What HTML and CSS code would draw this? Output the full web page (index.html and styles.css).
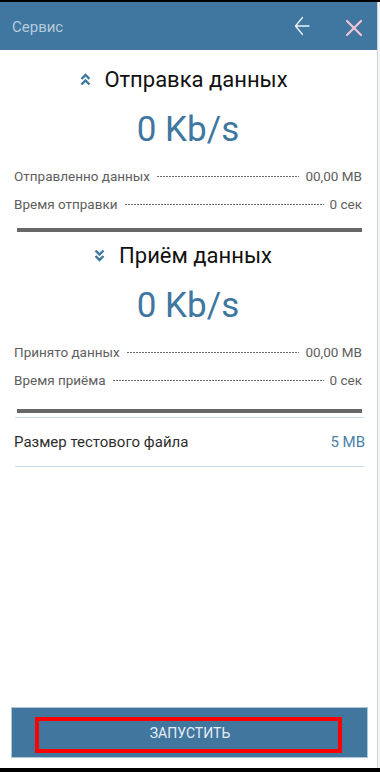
FILE: index.html
```html
<!DOCTYPE html>
<html lang="ru">
<head>
<meta charset="utf-8">
<title>Сервис</title>
<link rel="stylesheet" href="styles.css">
</head>
<body>
<div class="app">
  <div class="screen">
    <header class="header">
      <span class="header-title">Сервис</span>
      <div class="header-actions">
        <svg class="icon-back" width="16" height="20" viewBox="0 0 16 20">
          <path d="M8.5 1.5 L1.5 10 L8.5 18.5 M1.5 10 H15" fill="none" stroke="#eef3f7" stroke-width="1.3" stroke-linecap="round" stroke-linejoin="round"/>
        </svg>
        <svg class="icon-close" width="18" height="18" viewBox="0 0 18 18">
          <path d="M2 2 L16 16 M16 2 L2 16" fill="none" stroke="#f3c3d5" stroke-width="2.2" stroke-linecap="round"/>
        </svg>
      </div>
    </header>

    <main class="content">
      <div class="section-title title-up">
        <svg class="chev" width="11" height="13" viewBox="0 0 11 13">
          <path d="M1.5 6 L5.5 2 L9.5 6 M1.5 11.5 L5.5 7.5 L9.5 11.5" fill="none" stroke="#3f77a1" stroke-width="2.4"/>
        </svg>
        <span>Отправка данных</span>
      </div>
      <div class="speed speed-up">0 Kb/s</div>
      <div class="stat stat-first">
        <span class="stat-label">Отправленно данных</span>
        <span class="dots"></span>
        <span class="stat-value">00,00 MB</span>
      </div>
      <div class="stat">
        <span class="stat-label">Время отправки</span>
        <span class="dots"></span>
        <span class="stat-value">0 сек</span>
      </div>
      <div class="bar bar-first"></div>

      <div class="section-title title-down">
        <svg class="chev" width="11" height="13" viewBox="0 0 11 13">
          <path d="M1.5 1.5 L5.5 5.5 L9.5 1.5 M1.5 7 L5.5 11 L9.5 7" fill="none" stroke="#3f77a1" stroke-width="2.4"/>
        </svg>
        <span>Приём данных</span>
      </div>
      <div class="speed">0 Kb/s</div>
      <div class="stat stat-first">
        <span class="stat-label">Принято данных</span>
        <span class="dots"></span>
        <span class="stat-value">00,00 MB</span>
      </div>
      <div class="stat">
        <span class="stat-label">Время приёма</span>
        <span class="dots"></span>
        <span class="stat-value">0 сек</span>
      </div>
      <div class="bar bar-second"></div>
      <div class="rule rule-top"></div>
      <div class="setting">
        <span class="setting-label">Размер тестового файла</span>
        <span class="setting-value">5 MB</span>
      </div>
      <div class="rule"></div>
    </main>

    <footer class="footer">
      <button class="start-btn" type="button">
        <span class="start-label">ЗАПУСТИТЬ</span>
        <span class="highlight"></span>
      </button>
    </footer>
  </div>
</div>
</body>
</html>
```

FILE: styles.css
```css
* { box-sizing: border-box; }

html, body {
  margin: 0;
  padding: 0;
  background: #000;
}

body {
  width: 380px;
  height: 772px;
  overflow: hidden;
  font-family: Roboto, "Noto Sans", "Liberation Sans", sans-serif;
}

.app {
  margin-top: 2px;
  width: 380px;
  height: 766px;
  background: #f4f4f4;
  padding-right: 2px;
}

.screen {
  width: 378px;
  height: 766px;
  background: #fff;
  border-right: 1px solid #cfd4d8;
  display: flex;
  flex-direction: column;
}

.header {
  height: 48px;
  flex: 0 0 48px;
  background: #3f77a1;
  display: flex;
  align-items: center;
  padding: 2px 0 0 12px;
}

.header-title {
  font-size: 15px;
  color: #b7cbdd;
  flex: 1;
}

.header-actions {
  display: flex;
  align-items: center;
  padding-right: 14px;
}

.icon-back {
  margin-top: -3px;
  margin-right: 35px;
}

.icon-close {
  margin-top: 2px;
}

.content {
  padding: 0 15px 0 14px;
  display: flex;
  flex-direction: column;
}

.section-title {
  height: 40px;
  display: flex;
  align-items: center;
  justify-content: center;
  font-size: 22px;
  color: #111;
}

.title-up {
  margin-top: 9px;
  padding-right: 8px;
}

.title-down {
  margin-top: 3px;
  padding-right: 10px;
}

.title-up .chev { margin-right: 13px; }
.title-down .chev { margin-right: 14px; }

.speed {
  margin-top: 9px;
  height: 44px;
  line-height: 44px;
  text-align: center;
  font-size: 35px;
  color: #3f77a1;
}

.stat {
  height: 28px;
  display: flex;
  align-items: center;
  font-size: 13.5px;
  color: #5e5e5e;
}

.stat-first { margin-top: 10px; }

.dots {
  flex: 1;
  height: 1px;
  margin: 1px 6px 0 7px;
  background: repeating-linear-gradient(to right, #6a6a6a 0 2px, transparent 2px 3px);
}

.bar {
  height: 4px;
  margin-left: 3px;
  background: #676767;
}

.bar-first { margin-top: 10px; }
.bar-second { margin-top: 15px; }

.rule {
  height: 1px;
  margin: 0 -2px 0 1px;
  background: #c7dbe7;
}

.rule-top { margin-top: 4px; }

.setting {
  height: 48px;
  display: flex;
  align-items: center;
  justify-content: space-between;
  margin-right: -3px;
  font-size: 15px;
}

.setting-label { color: #2e2e2e; }
.setting-value { color: #4a7fa7; }

.footer {
  margin-top: auto;
  padding: 0 9px 10px 11px;
}

.start-btn {
  position: relative;
  width: 357px;
  height: 51px;
  margin: 0;
  padding: 0;
  border: 1px solid #aec6d7;
  background: #41769f;
  display: flex;
  align-items: center;
  justify-content: center;
  font-family: Roboto, "Noto Sans", "Liberation Sans", sans-serif;
  font-size: 14px;
  color: #e7eef5;
  cursor: pointer;
}

.start-label {
  margin-left: 1px;
}

.highlight {
  position: absolute;
  left: 23px;
  top: 9px;
  width: 307px;
  height: 36px;
  border: 4px solid #ff0000;
}
```
